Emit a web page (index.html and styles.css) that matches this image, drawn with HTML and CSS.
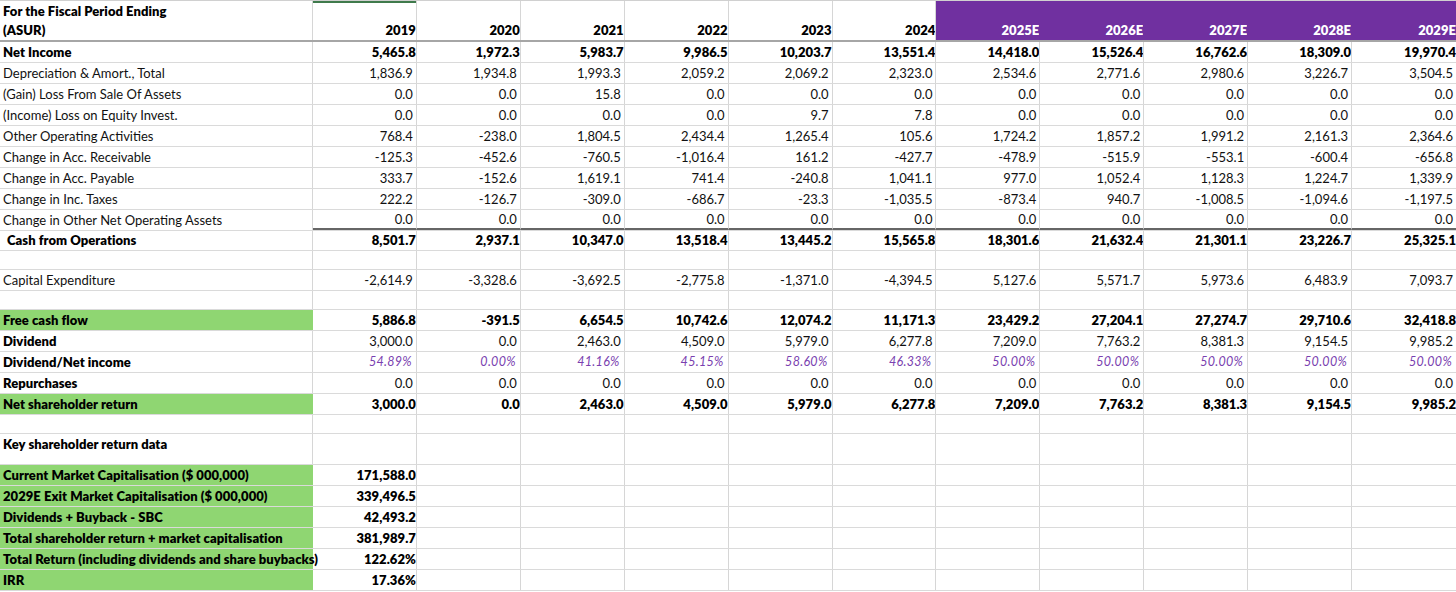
FILE: index.html
```html
<!DOCTYPE html>
<html>
<head>
<meta charset="utf-8">
<link rel="stylesheet" href="styles.css">
</head>
<body>
<div class="sheet">
  <div class="row head">
    <div class="c lab"><span>For the Fiscal Period Ending</span><span>(ASUR)</span></div>
    <div class="c yr sel">2019</div><div class="c yr">2020</div><div class="c yr">2021</div><div class="c yr">2022</div><div class="c yr">2023</div><div class="c yr">2024</div>
    <div class="c yr est">2025E</div><div class="c yr est">2026E</div><div class="c yr est">2027E</div><div class="c yr est">2028E</div><div class="c yr est">2029E</div>
  </div>
  <div class="row">
    <div class="c lab b">Net Income</div>
    <div class="c n b">5,465.8</div><div class="c n b">1,972.3</div><div class="c n b">5,983.7</div><div class="c n b">9,986.5</div><div class="c n b">10,203.7</div><div class="c n b">13,551.4</div><div class="c n b">14,418.0</div><div class="c n b">15,526.4</div><div class="c n b">16,762.6</div><div class="c n b">18,309.0</div><div class="c n b">19,970.4</div>
  </div>
  <div class="row">
    <div class="c lab">Depreciation &amp; Amort., Total</div>
    <div class="c n">1,836.9</div><div class="c n">1,934.8</div><div class="c n">1,993.3</div><div class="c n">2,059.2</div><div class="c n">2,069.2</div><div class="c n">2,323.0</div><div class="c n">2,534.6</div><div class="c n">2,771.6</div><div class="c n">2,980.6</div><div class="c n">3,226.7</div><div class="c n">3,504.5</div>
  </div>
  <div class="row">
    <div class="c lab">(Gain) Loss From Sale Of Assets</div>
    <div class="c n">0.0</div><div class="c n">0.0</div><div class="c n">15.8</div><div class="c n">0.0</div><div class="c n">0.0</div><div class="c n">0.0</div><div class="c n">0.0</div><div class="c n">0.0</div><div class="c n">0.0</div><div class="c n">0.0</div><div class="c n">0.0</div>
  </div>
  <div class="row">
    <div class="c lab">(Income) Loss on Equity Invest.</div>
    <div class="c n">0.0</div><div class="c n">0.0</div><div class="c n">0.0</div><div class="c n">0.0</div><div class="c n">9.7</div><div class="c n">7.8</div><div class="c n">0.0</div><div class="c n">0.0</div><div class="c n">0.0</div><div class="c n">0.0</div><div class="c n">0.0</div>
  </div>
  <div class="row">
    <div class="c lab">Other Operating Activities</div>
    <div class="c n">768.4</div><div class="c n">-238.0</div><div class="c n">1,804.5</div><div class="c n">2,434.4</div><div class="c n">1,265.4</div><div class="c n">105.6</div><div class="c n">1,724.2</div><div class="c n">1,857.2</div><div class="c n">1,991.2</div><div class="c n">2,161.3</div><div class="c n">2,364.6</div>
  </div>
  <div class="row">
    <div class="c lab">Change in Acc. Receivable</div>
    <div class="c n">-125.3</div><div class="c n">-452.6</div><div class="c n">-760.5</div><div class="c n">-1,016.4</div><div class="c n">161.2</div><div class="c n">-427.7</div><div class="c n">-478.9</div><div class="c n">-515.9</div><div class="c n">-553.1</div><div class="c n">-600.4</div><div class="c n">-656.8</div>
  </div>
  <div class="row">
    <div class="c lab">Change in Acc. Payable</div>
    <div class="c n">333.7</div><div class="c n">-152.6</div><div class="c n">1,619.1</div><div class="c n">741.4</div><div class="c n">-240.8</div><div class="c n">1,041.1</div><div class="c n">977.0</div><div class="c n">1,052.4</div><div class="c n">1,128.3</div><div class="c n">1,224.7</div><div class="c n">1,339.9</div>
  </div>
  <div class="row">
    <div class="c lab">Change in Inc. Taxes</div>
    <div class="c n">222.2</div><div class="c n">-126.7</div><div class="c n">-309.0</div><div class="c n">-686.7</div><div class="c n">-23.3</div><div class="c n">-1,035.5</div><div class="c n">-873.4</div><div class="c n">940.7</div><div class="c n">-1,008.5</div><div class="c n">-1,094.6</div><div class="c n">-1,197.5</div>
  </div>
  <div class="row pre-total">
    <div class="c lab">Change in Other Net Operating Assets</div>
    <div class="c n">0.0</div><div class="c n">0.0</div><div class="c n">0.0</div><div class="c n">0.0</div><div class="c n">0.0</div><div class="c n">0.0</div><div class="c n">0.0</div><div class="c n">0.0</div><div class="c n">0.0</div><div class="c n">0.0</div><div class="c n">0.0</div>
  </div>
  <div class="row total">
    <div class="c lab b indent">Cash from Operations</div>
    <div class="c n b">8,501.7</div><div class="c n b">2,937.1</div><div class="c n b">10,347.0</div><div class="c n b">13,518.4</div><div class="c n b">13,445.2</div><div class="c n b">15,565.8</div><div class="c n b">18,301.6</div><div class="c n b">21,632.4</div><div class="c n b">21,301.1</div><div class="c n b">23,226.7</div><div class="c n b">25,325.1</div>
  </div>
  <div class="row gap">
    <div class="c"></div><div class="c"></div><div class="c"></div><div class="c"></div><div class="c"></div><div class="c"></div><div class="c"></div><div class="c"></div><div class="c"></div><div class="c"></div><div class="c"></div><div class="c"></div>
  </div>
  <div class="row">
    <div class="c lab">Capital Expenditure</div>
    <div class="c n">-2,614.9</div><div class="c n">-3,328.6</div><div class="c n">-3,692.5</div><div class="c n">-2,775.8</div><div class="c n">-1,371.0</div><div class="c n">-4,394.5</div><div class="c n">5,127.6</div><div class="c n">5,571.7</div><div class="c n">5,973.6</div><div class="c n">6,483.9</div><div class="c n">7,093.7</div>
  </div>
  <div class="row gap">
    <div class="c"></div><div class="c"></div><div class="c"></div><div class="c"></div><div class="c"></div><div class="c"></div><div class="c"></div><div class="c"></div><div class="c"></div><div class="c"></div><div class="c"></div><div class="c"></div>
  </div>
  <div class="row">
    <div class="c lab b green">Free cash flow</div>
    <div class="c n b">5,886.8</div><div class="c n b">-391.5</div><div class="c n b">6,654.5</div><div class="c n b">10,742.6</div><div class="c n b">12,074.2</div><div class="c n b">11,171.3</div><div class="c n b">23,429.2</div><div class="c n b">27,204.1</div><div class="c n b">27,274.7</div><div class="c n b">29,710.6</div><div class="c n b">32,418.8</div>
  </div>
  <div class="row">
    <div class="c lab b">Dividend</div>
    <div class="c n">3,000.0</div><div class="c n">0.0</div><div class="c n">2,463.0</div><div class="c n">4,509.0</div><div class="c n">5,979.0</div><div class="c n">6,277.8</div><div class="c n">7,209.0</div><div class="c n">7,763.2</div><div class="c n">8,381.3</div><div class="c n">9,154.5</div><div class="c n">9,985.2</div>
  </div>
  <div class="row">
    <div class="c lab b">Dividend/Net income</div>
    <div class="c n pct">54.89%</div><div class="c n pct">0.00%</div><div class="c n pct">41.16%</div><div class="c n pct">45.15%</div><div class="c n pct">58.60%</div><div class="c n pct">46.33%</div><div class="c n pct">50.00%</div><div class="c n pct">50.00%</div><div class="c n pct">50.00%</div><div class="c n pct">50.00%</div><div class="c n pct">50.00%</div>
  </div>
  <div class="row">
    <div class="c lab b">Repurchases</div>
    <div class="c n">0.0</div><div class="c n">0.0</div><div class="c n">0.0</div><div class="c n">0.0</div><div class="c n">0.0</div><div class="c n">0.0</div><div class="c n">0.0</div><div class="c n">0.0</div><div class="c n">0.0</div><div class="c n">0.0</div><div class="c n">0.0</div>
  </div>
  <div class="row">
    <div class="c lab b green">Net shareholder return</div>
    <div class="c n b">3,000.0</div><div class="c n b">0.0</div><div class="c n b">2,463.0</div><div class="c n b">4,509.0</div><div class="c n b">5,979.0</div><div class="c n b">6,277.8</div><div class="c n b">7,209.0</div><div class="c n b">7,763.2</div><div class="c n b">8,381.3</div><div class="c n b">9,154.5</div><div class="c n b">9,985.2</div>
  </div>
  <div class="row gap">
    <div class="c"></div><div class="c"></div><div class="c"></div><div class="c"></div><div class="c"></div><div class="c"></div><div class="c"></div><div class="c"></div><div class="c"></div><div class="c"></div><div class="c"></div><div class="c"></div>
  </div>
  <div class="row key">
    <div class="c lab b">Key shareholder return data</div>
    <div class="c"></div><div class="c"></div><div class="c"></div><div class="c"></div><div class="c"></div><div class="c"></div><div class="c"></div><div class="c"></div><div class="c"></div><div class="c"></div><div class="c"></div>
  </div>
  <div class="row">
    <div class="c lab b green">Current Market Capitalisation ($ 000,000)</div>
    <div class="c n b">171,588.0</div><div class="c"></div><div class="c"></div><div class="c"></div><div class="c"></div><div class="c"></div><div class="c"></div><div class="c"></div><div class="c"></div><div class="c"></div><div class="c"></div>
  </div>
  <div class="row">
    <div class="c lab b green">2029E Exit Market Capitalisation ($ 000,000)</div>
    <div class="c n b">339,496.5</div><div class="c"></div><div class="c"></div><div class="c"></div><div class="c"></div><div class="c"></div><div class="c"></div><div class="c"></div><div class="c"></div><div class="c"></div><div class="c"></div>
  </div>
  <div class="row">
    <div class="c lab b green">Dividends + Buyback - SBC</div>
    <div class="c n b">42,493.2</div><div class="c"></div><div class="c"></div><div class="c"></div><div class="c"></div><div class="c"></div><div class="c"></div><div class="c"></div><div class="c"></div><div class="c"></div><div class="c"></div>
  </div>
  <div class="row">
    <div class="c lab b green">Total shareholder return + market capitalisation</div>
    <div class="c n b">381,989.7</div><div class="c"></div><div class="c"></div><div class="c"></div><div class="c"></div><div class="c"></div><div class="c"></div><div class="c"></div><div class="c"></div><div class="c"></div><div class="c"></div>
  </div>
  <div class="row">
    <div class="c lab b green over">Total Return (including dividends and share buybacks)</div>
    <div class="c n b">122.62%</div><div class="c"></div><div class="c"></div><div class="c"></div><div class="c"></div><div class="c"></div><div class="c"></div><div class="c"></div><div class="c"></div><div class="c"></div><div class="c"></div>
  </div>
  <div class="row">
    <div class="c lab b green">IRR</div>
    <div class="c n b">17.36%</div><div class="c"></div><div class="c"></div><div class="c"></div><div class="c"></div><div class="c"></div><div class="c"></div><div class="c"></div><div class="c"></div><div class="c"></div><div class="c"></div>
  </div>
</div>
</body>
</html>
```
FILE: styles.css
```css
* { box-sizing: border-box; }
html, body { margin: 0; padding: 0; background: #fff; }
body {
  font-family: Lato, "Noto Sans", "Liberation Sans", sans-serif;
  font-size: 13px;
  color: #111;
  width: 1456px;
  height: 592px;
  overflow: hidden;
}
.sheet { border-top: 1px solid #d0d0d0; }
.row {
  display: grid;
  grid-template-columns: 313px repeat(11, 1fr);
  height: 21px;
  border-bottom: 1px solid #dadada;
}
.row.head { height: 41px; border-bottom: 2px solid #a6a6a6; }
.row.total { height: 20px; }
.row.gap { height: 19px; }
.row.key { height: 31px; }
.c {
  border-right: 1px solid #d6d6d6;
  display: flex;
  align-items: center;
  white-space: nowrap;
  overflow: hidden;
  line-height: 1;
}
.c:last-child { border-right: none; }
.lab { padding-left: 3px; }
.lab.indent { padding-left: 7px; }
.lab.green { background: #8fd672; border-right-color: #8fd672; }
.lab.over { overflow: visible; position: relative; z-index: 1; }
.n { justify-content: flex-end; padding-right: 3px; }
.n.b { padding-right: 0; }
.b { font-weight: 800; color: #000; letter-spacing: 0.05px; }
.pct { font-style: italic; color: #7a3fb0; font-size: 12.5px; letter-spacing: 0.3px; padding-right: 4px; }
.head .lab {
  flex-direction: column;
  align-items: flex-start;
  justify-content: space-between;
  font-weight: 800;
  letter-spacing: 0.05px;
  color: #000;
  padding-top: 4px;
  padding-bottom: 3px;
}
.yr {
  justify-content: flex-end;
  align-items: flex-end;
  padding-bottom: 3px;
  padding-right: 0;
  font-weight: 800;
  letter-spacing: 0.05px;
  color: #000;
}
.yr.sel { box-shadow: inset 0 2px 0 #3f7a4c; }
.yr.est { background: #7030a0; color: #fff; border-right-color: #7030a0; }
.pre-total .c:not(:first-child) { border-bottom: 2px solid #666; }
.key .lab { align-items: flex-start; padding-top: 4px; }
```
